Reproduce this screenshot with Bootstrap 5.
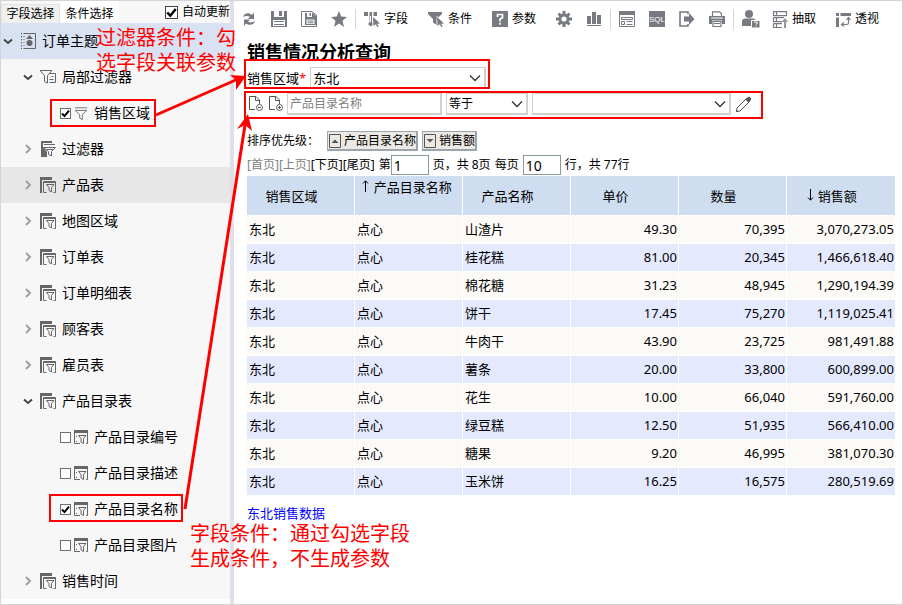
<!DOCTYPE html>
<html lang="zh-CN">
<head>
<meta charset="utf-8">
<meta name="viewport" content="width=device-width, initial-scale=1">
<title>销售情况分析查询</title>
<link rel="stylesheet" href="https://cdn.jsdelivr.net/npm/bootstrap@5.3.0/dist/css/bootstrap.min.css">
<style>
:root{--ui:"Noto Sans","Noto Sans CJK SC",sans-serif}
body{font-family:var(--ui);font-size:12px;line-height:16px;color:#000;background:#fff}
svg{display:block;flex:none}
.app{min-height:100vh;border:1px solid #d4d4d4}
.side{width:229px;flex:none;padding-bottom:4px}
.divider{width:4px;flex:none;background:#dfe0ea}
.tabs{height:22px;background:#f7f7f7}
.tab{border:0;padding:0 5px;line-height:26px;height:22px;background:#fff;color:#000;width:59px}
.tab.idle{background:#f0f0ee;border:1px solid #e4e4de;border-bottom:0;height:19px;line-height:18px;padding:0 4px}
.tick{appearance:none;width:11px;height:11px;margin:0;border:1px solid #707070;border-radius:0;background:#fff center/9px 9px no-repeat;flex:none}
.tick:checked{background-image:url("data:image/svg+xml,%3Csvg xmlns='http://www.w3.org/2000/svg' viewBox='0 0 9 9'%3E%3Cpath d='M1 4.5l2.5 2.6L8 1.6' fill='none' stroke='%23000' stroke-width='2'/%3E%3C/svg%3E")}
.tick.big{width:13px;height:13px;background-size:11px 11px;border-color:#444}
.tree{background:#f7f7f7;font-size:14px;line-height:20px}
.node{height:36px;display:flex;align-items:center;margin:0;padding:0;white-space:nowrap}
.node svg{color:#666}
.root{background:#d9e2f3;padding-left:1px}
.l1{padding-left:21px}
.l2{padding-left:59px}
.l2 svg{margin:0 6px 0 3px}
.hot{background:#e7e7e7}
.tw{border:0;background:none;padding:0;width:12px;height:12px;margin-right:6px;flex:none}
.ic{margin-right:6px}
.bar{height:36px;padding:0 0 0 7px}
.tool{border:0;background:none;padding:0;color:#000;display:flex;align-items:center;gap:4px;line-height:16px;white-space:nowrap}
.tool svg{color:#777a80}
.g14{gap:14px}.g20{gap:20px}
.sep{width:1px;height:20px;background:#d4d6dc;margin:0 8px;flex:none}
.body-pad{padding:4px 7px 0 13px}
h1{font-size:18px;line-height:22px;font-weight:700;margin:0}
.fld{border:2px solid #d4d0c8;border-width:1px 2px 2px 1px;border-radius:0;background-color:#fff;font-size:12px;line-height:16px;height:22px;padding:0 2px;color:#000;font-family:var(--ui)}
.fld::placeholder{color:#808080}
select.fld{background-image:url("data:image/svg+xml,%3Csvg xmlns='http://www.w3.org/2000/svg' viewBox='0 0 12 8'%3E%3Cpath d='M1 1.5l5 5 5-5' fill='none' stroke='%23333' stroke-width='1.3'/%3E%3C/svg%3E");background-size:12px 8px;background-position:right 3px center;background-repeat:no-repeat;appearance:none}
.fld.w-region{width:176px;font-size:13px}
.w-name{width:155px}.w-op{width:82px}.w-val{width:199px}
.sortbtn{border:2px solid #9aa6ae;border-width:1px 2px 2px 1px;background:#ece9e4;height:20px;padding:0 0 0 1px;display:flex;align-items:center;gap:3px;color:#000;line-height:16px;border-radius:0}
.pg{border:1px solid #8a9999;border-radius:0;height:20px;width:38px;padding:0 2px;font-size:14px;line-height:18px;font-family:"Noto Sans",sans-serif;color:#000;background:#fff}
.pager{padding:4px 0 1px}
.plink{border:0;background:none;padding:0;color:#000}
.plink:disabled{color:#808080}
.grid{width:100%;table-layout:fixed;border-collapse:separate;border-spacing:0;font-size:13px;line-height:18px;margin:0}
.grid th{background:#cfddf0;font-weight:400;text-align:center;height:40px;padding:1px 18px 0 0;border-right:1px solid #fff;border-bottom:1px solid #fff;white-space:nowrap}
.grid td{height:28px;padding:0 1px 1px 2px;border-right:1px solid #fff;border-bottom:1px solid #fff;background:#fbfaf7}
.grid tr:nth-child(even) td{background:#e4e9fe}
.grid td:nth-child(n+4){text-align:right}
.grid tr>:last-child{border-right:0}
.grid .wrapth{vertical-align:top;padding:2px 4px 0 0}
.grid svg{display:inline-block;vertical-align:0}
.fieldname{font-size:13px;line-height:18px}
.star{color:#f00}
.lnk{font-size:13px;line-height:18px;color:#00f;text-decoration:none}
.marks{left:0;top:0;pointer-events:none;overflow:visible}
.note{position:absolute;color:#f00;font-size:20px;line-height:25px;pointer-events:none;white-space:nowrap}
.note-a{left:95px;top:24px}
.note-b{left:189px;top:520px}
</style>
<script src="https://cdn.jsdelivr.net/npm/bootstrap@5.3.0/dist/js/bootstrap.bundle.min.js" defer></script>
</head>
<body>
<svg width="0" height="0" class="position-absolute" aria-hidden="true">
<symbol id="down" viewBox="0 0 12 12"><path d="M2 4.500L6 8l4-3.500" fill="none" stroke="#444" stroke-width="2"/></symbol>
<symbol id="right" viewBox="0 0 12 12"><path d="M4 2l4 4-4 4" fill="none" stroke="#a0a0a0" stroke-width="2"/></symbol>
<symbol id="topic" viewBox="0 0 16 16"><path d="M4 .5h11.500v15H4" fill="none" stroke="currentColor"/><path d="M1.500 0v16" stroke="currentColor" stroke-dasharray="1.500 1.500"/><path d="M4 0v16" stroke="currentColor" stroke-dasharray="1 2"/><path d="M6 6l3.500-4L13 6z" fill="currentColor"/><circle cx="9.500" cy="10" r="3" fill="currentColor"/></symbol>
<symbol id="partf" viewBox="0 0 16 16"><path d="M0 1.500h12M.5 2l4 4.500v6l3 1.500V6.500l4-4.500M9.500 4.500h6v9h-6M11.500 7.500h2M9.500 10.500h4" fill="none" stroke="currentColor"/></symbol>
<symbol id="funnel" viewBox="0 0 16 16"><path d="M1 1.500h14M1.500 4.500h13L9.500 9.500v5.500l-3-1.800V9.500z" fill="none" stroke="currentColor"/></symbol>
<symbol id="filt" viewBox="0 0 16 16"><path d="M1 0h11v2H3v4l4 5v5H1z" fill="currentColor"/><path d="M4 3.500h11M3.500 6.500h12L11.500 10.500V15L8.500 13.500v-3zM6 8.500h7" fill="none" stroke="currentColor"/></symbol>
<symbol id="tbl" viewBox="0 0 16 16"><path d="M0 0h12v3H2v13H0z" fill="currentColor"/><path d="M3.500 15.500V4.500h12v11h-2M3.500 15.500h3M3 5.500h12M6.500 7.500h7.500l-2.500 3v4.500l-2.500-1.500v-3z" fill="none" stroke="currentColor"/></symbol>
<symbol id="colf" viewBox="0 0 14 14"><path d="M0 0h14v3H0z" fill="currentColor"/><path d="M.5 3v10.500H6M13.500 3v10.500H12M4.500 5.500h7.500L9.500 8.500v5l-2.500-1.500V8.500z" fill="none" stroke="currentColor"/><path d="M2 6h1v1H2zm0 5h1v1H2z" fill="currentColor"/></symbol>
<symbol id="cur" viewBox="0 0 8 10"><path d="M0 0l7 6.500-3 .2 1.700 2.800-1.400.5L2.700 7.200.5 9z" fill="currentColor"/></symbol>
</svg>
<div class="app position-relative d-flex">
<aside class="side">
<div class="tabs d-flex align-items-end">
<button class="tab idle text-nowrap" type="button">字段选择</button><button class="tab text-nowrap" type="button">条件选择</button>
<label class="d-flex align-items-center ms-auto text-nowrap align-self-stretch"><input type="checkbox" class="tick big" checked><span class="ps-1">自动更新</span></label>
</div>
<div class="tree">
<div class="node root"><button class="tw" type="button" aria-label="收起"><svg width="12" height="12"><use href="#down"/></svg></button><svg class="ic" width="16" height="16"><use href="#topic"/></svg>订单主题</div>
<div class="node l1"><button class="tw" type="button" aria-label="收起"><svg width="12" height="12"><use href="#down"/></svg></button><svg class="ic" width="16" height="16"><use href="#partf"/></svg>局部过滤器</div>
<label class="node l2"><input class="tick" type="checkbox" checked><svg width="14" height="15"><use href="#funnel"/></svg>销售区域</label>
<div class="node l1"><button class="tw" type="button" aria-label="展开"><svg width="12" height="12"><use href="#right"/></svg></button><svg class="ic" width="16" height="16"><use href="#filt"/></svg>过滤器</div>
<div class="node l1 hot"><button class="tw" type="button" aria-label="展开"><svg width="12" height="12"><use href="#right"/></svg></button><svg class="ic" width="16" height="16"><use href="#tbl"/></svg>产品表</div>
<div class="node l1"><button class="tw" type="button" aria-label="展开"><svg width="12" height="12"><use href="#right"/></svg></button><svg class="ic" width="16" height="16"><use href="#tbl"/></svg>地图区域</div>
<div class="node l1"><button class="tw" type="button" aria-label="展开"><svg width="12" height="12"><use href="#right"/></svg></button><svg class="ic" width="16" height="16"><use href="#tbl"/></svg>订单表</div>
<div class="node l1"><button class="tw" type="button" aria-label="展开"><svg width="12" height="12"><use href="#right"/></svg></button><svg class="ic" width="16" height="16"><use href="#tbl"/></svg>订单明细表</div>
<div class="node l1"><button class="tw" type="button" aria-label="展开"><svg width="12" height="12"><use href="#right"/></svg></button><svg class="ic" width="16" height="16"><use href="#tbl"/></svg>顾客表</div>
<div class="node l1"><button class="tw" type="button" aria-label="展开"><svg width="12" height="12"><use href="#right"/></svg></button><svg class="ic" width="16" height="16"><use href="#tbl"/></svg>雇员表</div>
<div class="node l1"><button class="tw" type="button" aria-label="收起"><svg width="12" height="12"><use href="#down"/></svg></button><svg class="ic" width="16" height="16"><use href="#tbl"/></svg>产品目录表</div>
<label class="node l2"><input class="tick" type="checkbox"><svg width="14" height="14"><use href="#colf"/></svg>产品目录编号</label>
<label class="node l2"><input class="tick" type="checkbox"><svg width="14" height="14"><use href="#colf"/></svg>产品目录描述</label>
<label class="node l2"><input class="tick" type="checkbox" checked><svg width="14" height="14"><use href="#colf"/></svg>产品目录名称</label>
<label class="node l2"><input class="tick" type="checkbox"><svg width="14" height="14"><use href="#colf"/></svg>产品目录图片</label>
<div class="node l1"><button class="tw" type="button" aria-label="展开"><svg width="12" height="12"><use href="#right"/></svg></button><svg class="ic" width="16" height="16"><use href="#tbl"/></svg>销售时间</div>
</div>
</aside>
<div class="divider"></div>
<main class="flex-grow-1">
<div class="bar d-flex align-items-center" role="toolbar">
<div class="d-flex g14">
<button class="tool" type="button" aria-label="刷新"><svg width="16" height="16" viewBox="0 0 16 16"><path d="M2 6c1-4 6-5 9-2l2-2.500V8H7l2-2C7 4.500 4.500 4.500 2 6zM14 10c-1 4-6 5-9 2.500L3 15V8.500h6L7 10.500c2 1.500 4.500 1.200 7-.5z" fill="currentColor"/></svg></button>
<button class="tool" type="button" aria-label="保存"><svg width="16" height="16" viewBox="0 0 16 16"><path d="M0 0h16v16H0z" fill="currentColor"/><path d="M3 0h10v6H3zM2 9h12v6H2z" fill="#fff"/><path d="M8 0h3v5H8zM3 10h10v1H3zM3 13h10v1H3z" fill="currentColor"/></svg></button>
<button class="tool" type="button" aria-label="另存为"><svg width="16" height="16" viewBox="0 0 16 16"><path d="M.5.5H11L15.500 4v11.500H.5z" fill="none" stroke="currentColor"/><path d="M4 2h8l3 3v9H4z" fill="currentColor"/><path d="M6 2h5v4H6zM5.500 8.500h8v4.500h-8z" fill="#fff"/><path d="M8.500 2h1.500v3H8.500zM6.500 9.500h6v1h-6zM6.500 11.300h6v1h-6z" fill="currentColor"/></svg></button>
<button class="tool" type="button" aria-label="收藏"><svg width="16" height="16" viewBox="0 0 16 16"><path d="M8 0l2.200 5.600 5.800.4-4.500 3.800L13 16l-5-3.500L3 16l1.500-6.200L0 6l5.800-.4z" fill="currentColor"/></svg></button>
</div><span class="sep"></span>
<div class="d-flex g20">
<button class="tool" type="button"><svg width="16" height="16" viewBox="0 0 16 16"><path d="M0 1h4v4H0zM5.500 1h2.500v14H5.500zM9.500 1H13v4H9.500zM4.500 12h4v2h-4z" fill="currentColor"/><path d="M6.500 5v6" stroke="#fff"/><use href="#cur" x="9" y="6" width="8" height="10"/></svg>字段</button>
<button class="tool" type="button"><svg width="16" height="16" viewBox="0 0 16 16"><path d="M0 1h14v2L8.500 8v6L5 11.500V8L0 3z" fill="currentColor"/><path d="M9 5l1.500 10" stroke="#fff"/><use href="#cur" x="9" y="6" width="8" height="10"/></svg>条件</button>
<button class="tool" type="button"><svg width="16" height="16" viewBox="0 0 16 16"><path d="M0 0h16v16H0z" fill="currentColor"/><path d="M5.500 6V3.500h5v3.200L8 8v2.500M8 11.800v2" fill="none" stroke="#fff" stroke-width="1.700"/></svg>参数</button>
<div class="d-flex g14">
<button class="tool" type="button" aria-label="设置"><svg width="16" height="16" viewBox="0 0 16 16"><g stroke="currentColor" stroke-width="3"><path d="M8 0v16M0 8h16M2.500 2.500l11 11M13.500 2.500l-11 11"/></g><circle cx="8" cy="8" r="5.500" fill="currentColor"/><circle cx="8" cy="8" r="2.600" fill="#fff"/></svg></button>
<button class="tool" type="button" aria-label="图表"><svg width="16" height="16" viewBox="0 0 16 16"><path d="M1 5h4v8H1zM6 1h4v12H6zM11 4h4v9h-4zM1 14h14v1H1z" fill="currentColor"/></svg></button>
</div></div><span class="sep"></span>
<div class="d-flex g14">
<button class="tool" type="button" aria-label="表单"><svg width="16" height="16" viewBox="0 0 16 16"><path d="M.5.5h15v15H.5zM2.500 6.500h11v2h-11zM2.500 10.500h3v3h-3zM7.500 10.500h6M7.500 13.500h6" fill="none" stroke="currentColor"/><path d="M0 0h16v4H0z" fill="currentColor"/></svg></button>
<button class="tool" type="button" aria-label="查看 SQL"><svg width="16" height="16" viewBox="0 0 16 16"><path d="M0 0h16v16H0z" fill="currentColor"/><text x="8" y="11" font-size="8" text-anchor="middle" fill="#fff" font-family="Liberation Sans">SQL</text></svg></button>
<button class="tool" type="button" aria-label="导出"><svg width="16" height="16" viewBox="0 0 16 16"><path d="M9 3V1H1v14h8v-2" fill="none" stroke="currentColor" stroke-width="1.600"/><path d="M5 5.500h5V2l5.500 6-5.500 6v-3.500H5z" fill="currentColor"/></svg></button>
<button class="tool" type="button" aria-label="打印"><svg width="16" height="16" viewBox="0 0 16 16"><path d="M3.500 5V.8h7l2 2V5M4 10.500h8v5H4z" fill="none" stroke="currentColor" stroke-width="1.200"/><path d="M0 5h16v8h-3V9.500H3V13H0zM5 12h6v1H5z" fill="currentColor"/><path d="M2 7h12" stroke="#fff"/></svg></button>
</div><span class="sep"></span>
<div class="d-flex g20">
<div class="d-flex gap-2">
<button class="tool me-1" type="button" aria-label="用户"><svg width="18" height="18" viewBox="0 0 18 18"><circle cx="7" cy="4" r="4" fill="currentColor"/><path d="M0 16V11q0-2 3-2.500h8q3 .5 3 2.500v5z" fill="currentColor"/><path d="M9.500 10.500h8.500V18H9.500z" fill="currentColor" stroke="#fff"/><path d="M12.500 13v-.8h2.700v1.500l-1.300.8M13.800 15.600v1" fill="none" stroke="#fff"/></svg></button>
<button class="tool" type="button"><svg width="16" height="17" viewBox="0 0 16 17"><path d="M1.500.6h13v4h-13zM1.500 6.600H12M1.500 6.600v4H10M1.500 12.600H10M1.500 12.600v4H10M4.500.6v4M4.500 6.600v4M4.500 12.600v4" fill="none" stroke="currentColor" stroke-width="1.200"/><path d="M12 17v-6H9.500L13 7l3 4h-2v6z" fill="#999"/></svg>抽取</button></div>
<button class="tool" type="button"><svg width="15" height="15" viewBox="0 0 15 15"><path d="M0 1h3v3H0zM4.500 1H15v3H4.500zM0 5.500h3V15H0z" fill="currentColor"/><path d="M12.500 6v5q0 1.500-2 1.500H6M10.500 8l2-2.500 2 2.500M8 10.500l-2.500 2 2.500 2" fill="none" stroke="currentColor" stroke-width="1.200"/></svg>透视</button>
</div>
</div>
<div class="body-pad">
<h1>销售情况分析查询</h1>
<div class="d-flex align-items-center pt-1"><label for="region" class="fieldname text-nowrap">销售区域<span class="star">*</span></label><select id="region" class="fld w-region ms-1"><option>东北</option></select></div>
<div class="d-flex align-items-center gap-1 pt-1">
<button class="tool" type="button" aria-label="移除条件"><svg width="16" height="16" viewBox="0 0 16 16"><path d="M8 13.500H2.500V.5H9L12.500 4v4M8.500.5V4.500h4" fill="none" stroke="#555"/><circle cx="12.500" cy="11.500" r="3" fill="#fff" stroke="#555"/><path d="M11 11.500h3" stroke="#555"/></svg></button>
<button class="tool" type="button" aria-label="添加条件"><svg width="16" height="16" viewBox="0 0 16 16"><path d="M8 13.500H2.500V.5H9L12.500 4v4M8.500.5V4.500h4" fill="none" stroke="#555"/><circle cx="12.500" cy="11.500" r="3" fill="#fff" stroke="#555"/><path d="M11 11.500h3M12.500 10v3" stroke="#555"/></svg></button>
<input class="fld w-name" type="text" placeholder="产品目录名称" aria-label="条件字段">
<select class="fld w-op" aria-label="运算符"><option>等于</option></select>
<select class="fld w-val" aria-label="条件值"><option></option></select>
<button class="tool" type="button" aria-label="编辑"><svg width="17" height="17" viewBox="0 0 17 17"><path d="M1.500 15.500l.5-3.500L11.500 2.500l3 3L5 15z" fill="#fff" stroke="#555"/><path d="M10.500 3.500L13 1l1.500-.2L16.200 2.500 16 4l-2.500 2.500zM1 16v-2.500L3.500 16z" fill="#555"/></svg></button>
</div>
<div class="d-flex align-items-center pt-3 gap-1"><span class="me-1">排序优先级：</span>
<button class="sortbtn text-nowrap" type="button"><svg width="12" height="14" viewBox="0 0 12 14"><path d="M.5.5h11v13H.5z" fill="none" stroke="#555"/><path d="M2.500 9L6 5.500 9.500 9z" fill="#555"/></svg>产品目录名称</button>
<button class="sortbtn text-nowrap" type="button"><svg width="12" height="14" viewBox="0 0 12 14"><path d="M.5.500h11v13H.5z" fill="none" stroke="#555"/><path d="M2.500 5L6 8.500 9.500 5z" fill="#555"/></svg>销售额</button></div>
<div class="pager d-flex align-items-center text-nowrap"><button class="plink" disabled type="button">[首页]</button><button class="plink" disabled type="button">[上页]</button><button class="plink" type="button">[下页]</button><button class="plink me-1" type="button">[尾页]</button><label for="pno">第</label><input id="pno" class="pg" value="1"><span class="px-1">页，共 8页</span><label for="psz" class="pe-1">每页</label><input id="psz" class="pg" value="10"><span class="ps-1">行，共 77行</span></div>
<table class="grid">
<thead><tr><th>销售区域</th><th class="wrapth"><svg width="9" height="12" viewBox="0 0 9 12"><path d="M4.500 12V1M2 3.500L4.500.800 7 3.500" fill="none" stroke="#000"/></svg> 产品目录名称</th><th>产品名称</th><th>单价</th><th>数量</th><th><svg width="7" height="12" viewBox="0 0 7 12"><path d="M3.500 0v11M1 8.500l2.500 2.700L6 8.500" fill="none" stroke="#000"/></svg> 销售额</th></tr></thead>
<tbody>
<tr><td>东北</td><td>点心</td><td>山渣片</td><td>49.30</td><td>70,395</td><td>3,070,273.05</td></tr>
<tr><td>东北</td><td>点心</td><td>桂花糕</td><td>81.00</td><td>20,345</td><td>1,466,618.40</td></tr>
<tr><td>东北</td><td>点心</td><td>棉花糖</td><td>31.23</td><td>48,945</td><td>1,290,194.39</td></tr>
<tr><td>东北</td><td>点心</td><td>饼干</td><td>17.45</td><td>75,270</td><td>1,119,025.41</td></tr>
<tr><td>东北</td><td>点心</td><td>牛肉干</td><td>43.90</td><td>23,725</td><td>981,491.88</td></tr>
<tr><td>东北</td><td>点心</td><td>薯条</td><td>20.00</td><td>33,800</td><td>600,899.00</td></tr>
<tr><td>东北</td><td>点心</td><td>花生</td><td>10.00</td><td>66,040</td><td>591,760.00</td></tr>
<tr><td>东北</td><td>点心</td><td>绿豆糕</td><td>12.50</td><td>51,935</td><td>566,410.00</td></tr>
<tr><td>东北</td><td>点心</td><td>糖果</td><td>9.20</td><td>46,995</td><td>381,070.30</td></tr>
<tr><td>东北</td><td>点心</td><td>玉米饼</td><td>16.25</td><td>16,575</td><td>280,519.69</td></tr>
</tbody></table>
<div class="pt-2"><a class="lnk" href="#">东北销售数据</a></div>
</div>
</main>
<svg class="marks position-absolute" width="780" height="540" aria-hidden="true"><g transform="translate(-1 -1)" fill="none" stroke="#f00" stroke-width="2"><path d="M51 100h104v26H51zM50 495h132v26H50zM245 60h244v28H245zM245 92h517v26H245z"/><path d="M156 115L238 79M185 509L245 125" stroke-width="3"/><path d="M246 76l-16-1 6 5 0 10zM248 114l-11 15 8-4 7 6z" fill="#f00" stroke="none"/></g></svg>
<div class="note note-a">过滤器条件：勾<br>选字段关联参数</div>
<div class="note note-b">字段条件：通过勾选字段<br>生成条件，不生成参数</div>
</div>
</body>
</html>
